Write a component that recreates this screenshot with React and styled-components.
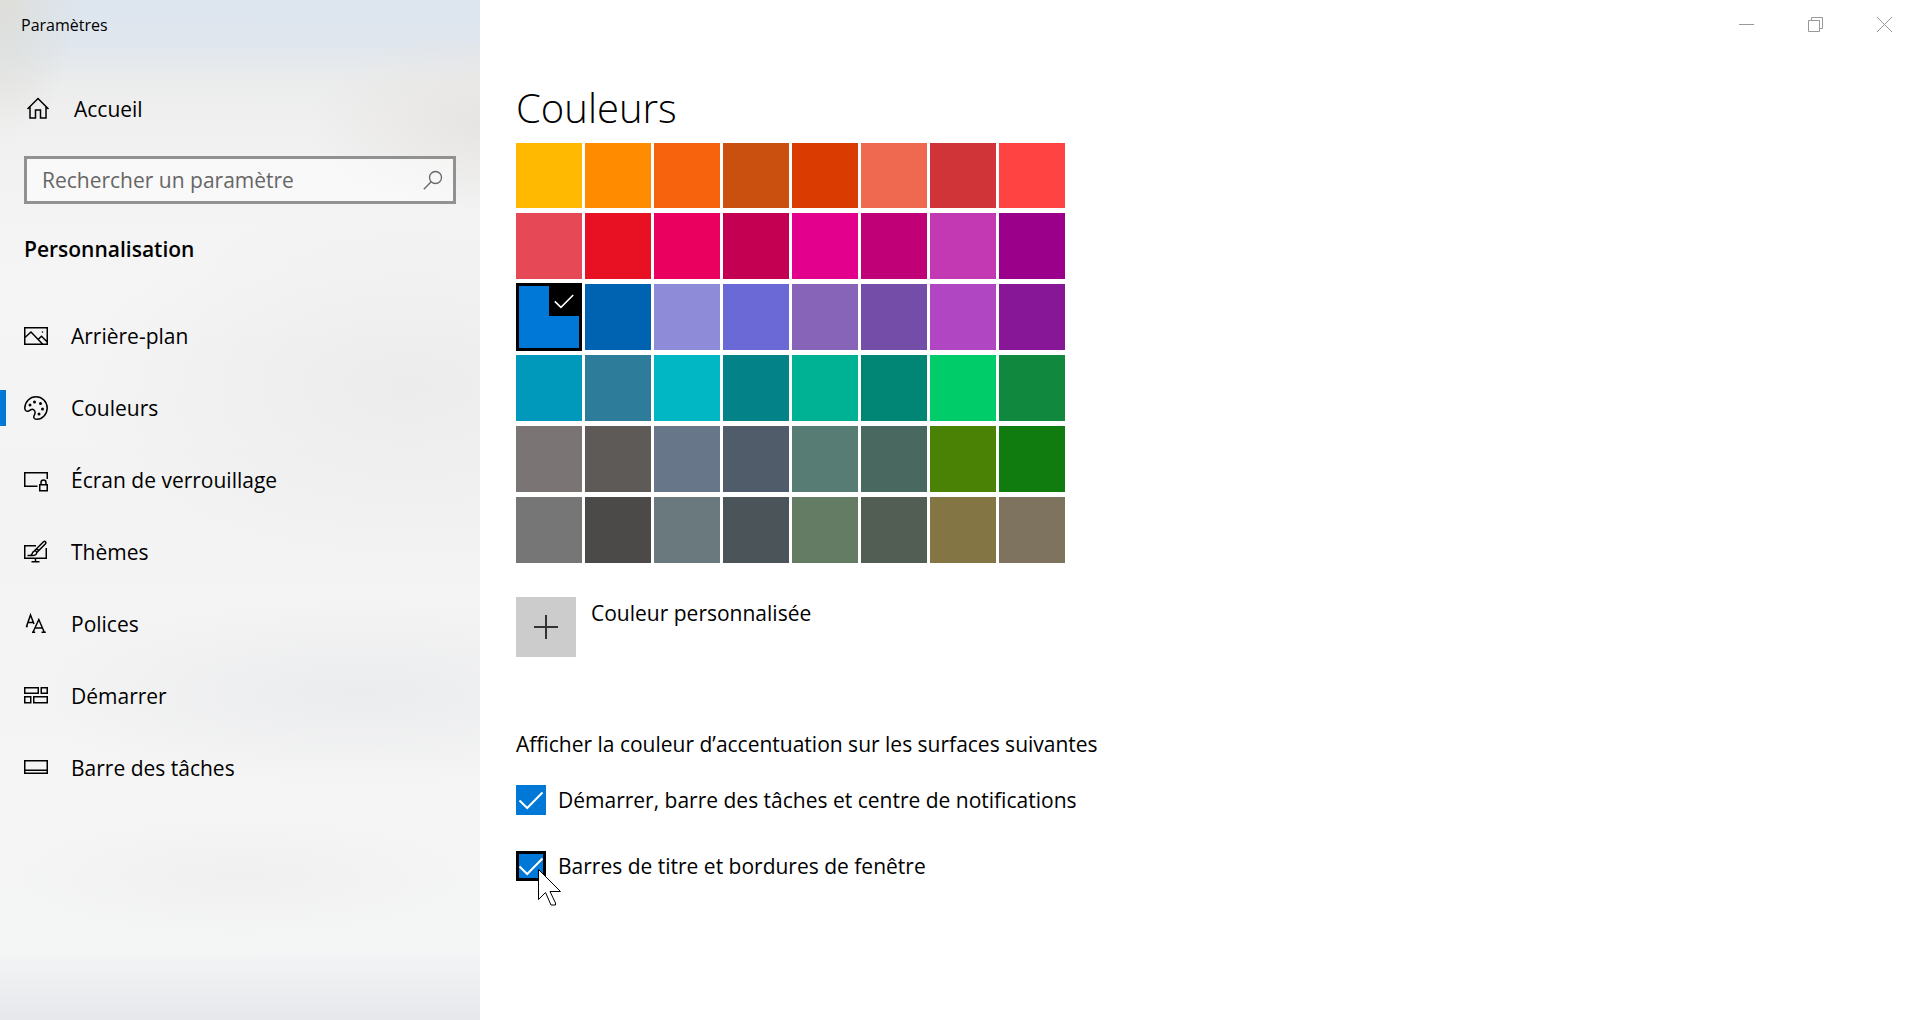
import React, { useState } from 'react';
import styled, { createGlobalStyle } from 'styled-components';

const swatches = [
  '#ffb900', '#ff8c00', '#f7630c', '#ca5010', '#da3b01', '#ef6950', '#d13438', '#ff4343',
  '#e74856', '#e81123', '#ea005e', '#c30052', '#e3008c', '#bf0077', '#c239b3', '#9a0089',
  '#0078d7', '#0063b1', '#8e8cd8', '#6b69d6', '#8764b8', '#744da9', '#b146c2', '#881798',
  '#0099bc', '#2d7d9a', '#00b7c3', '#038387', '#00b294', '#018574', '#00cc6a', '#10893e',
  '#7a7574', '#5d5a58', '#68768a', '#515c6b', '#567c73', '#486860', '#498205', '#107c10',
  '#767676', '#4c4a48', '#69797e', '#4a5459', '#647c64', '#525e54', '#847545', '#7e735f',
];

const HomeIcon = () => (
  <Icon viewBox="0 0 24 24">
    <path d="M1.5 12 12 1.5 22.5 12M4 10v11h5.500v-8h5v8H20V10" />
  </Icon>
);

const SearchIcon = () => (
  <svg width="20" height="20" viewBox="0 0 20 20" fill="none" stroke="#666" strokeWidth="1.300">
    <circle cx="12.500" cy="7.500" r="6" />
    <path d="M8.200 11.800.800 19.200" />
  </svg>
);

const PictureIcon = () => (
  <Icon viewBox="0 0 24 24">
    <path d="M.75 3.750h22.500v16.500H.750zM1 13.500l6-5.500 11.500 12M14 15.500l3.500-3.200 5.500 5.500" />
    <circle cx="18.500" cy="8" r=".8" fill="#000" stroke="none" />
  </Icon>
);

const PaletteIcon = () => (
  <Icon viewBox="0 0 24 24">
    <path d="M.800 12C1 5.500 6 .800 12 .800S23.200 5.800 23.200 12 18.300 23.200 13 23.200c-2.200 0-3.600-.9-3.200-2.700.4-1.700 1.500-2 1.300-4.200-.2-1.900-1.700-3.200-3.500-2.900-1.700.3-2.100 1.900-3.900 1.900C1.700 15.300.800 13.900.800 12z" />
    <g fill="#000" stroke="none">
      <circle cx="6" cy="9" r="1.500" />
      <circle cx="10.500" cy="6" r="1.500" />
      <circle cx="16.500" cy="7.500" r="1.500" />
      <circle cx="18.500" cy="13" r="1.500" />
      <circle cx="15" cy="18" r="1.500" />
    </g>
  </Icon>
);

const LockScreenIcon = () => (
  <Icon viewBox="0 0 24 24">
    <path d="M13.500 18.250H.750V4.750h22.500V11M15.750 16.750h7.500v6h-7.500zM17 16.500V14.500a2.500 2.500 0 0 1 5 0v2" />
  </Icon>
);

const ThemesIcon = () => (
  <Icon viewBox="0 0 24 24">
    <path d="M12 5.750H.750v12.500h21.500V8M11.500 18.500v3M7.500 21.750h8M3.500 15.500h5c2.500 0 4-.8 4.200-2.800 0-1.200-1-2-2.200-1.800-2.500.3-1.500 3.200-3.800 4.400M10.500 10.800 19.500 1.800c1.600-1.200 3 .4 2 1.900L12.800 12.600M12.800 8.800l2 2" />
  </Icon>
);

const FontsIcon = () => (
  <Icon viewBox="0 0 24 24" aria-hidden="true">
    <path d="M2.500 14.500 6.500 3l3.500 9M4 10.500h5M1.800 14.500h2M9 20.200 14.800 7.500l5.500 12.700M11 16h7.500M8 20.300h3.200M17.500 20.300h4.300" />
  </Icon>
);

const StartIcon = () => (
  <Icon viewBox="0 0 24 24">
    <path d="M.750 3.750h13.500v5.500H.750zM17.250 3.750h6v5.500h-6zM.750 12.750h6v6h-6zM9.750 12.750h13.500v6H9.750z" />
  </Icon>
);

const TaskbarIcon = () => (
  <Icon viewBox="0 0 24 24">
    <path d="M.750 4.750h22.500v12.500H.750zM1 14.250h22" />
  </Icon>
);

const CheckMark = ({ size }) => (
  <svg width={size} height={size} viewBox="0 0 30 30" fill="none" stroke="#fff" strokeWidth="2">
    <path d="M3.500 15.500 11.200 23 26.500 7.500" />
  </svg>
);

const navItems = [
  { label: 'Arrière-plan', icon: PictureIcon },
  { label: 'Couleurs', icon: PaletteIcon },
  { label: 'Écran de verrouillage', icon: LockScreenIcon },
  { label: 'Thèmes', icon: ThemesIcon },
  { label: 'Polices', icon: FontsIcon },
  { label: 'Démarrer', icon: StartIcon },
  { label: 'Barre des tâches', icon: TaskbarIcon },
];

const App = () => {
  const [accent, setAccent] = useState('#0078d7');
  const [onTaskbar, setOnTaskbar] = useState(true);
  const [onTitleBars, setOnTitleBars] = useState(true);

  return (
    <>
      <GlobalStyle />
      <Window>
        <Sidebar>
          <AppTitle>Paramètres</AppTitle>
          <HomeLink href="#accueil">
            <HomeIcon />
            Accueil
          </HomeLink>
          <SearchBox>
            <input type="text" aria-label="Rechercher un paramètre" placeholder="Rechercher un paramètre" />
            <SearchIcon />
          </SearchBox>
          <Category>Personnalisation</Category>
          <nav>
            {navItems.map(({ label, icon: NavIcon }) => (
              <NavLink key={label} href="#" $active={label === 'Couleurs'}>
                <NavIcon />
                {label}
              </NavLink>
            ))}
          </nav>
        </Sidebar>
        <Main>
          <WindowControls>
            <button type="button" aria-label="Réduire">
              <ControlIcon viewBox="0 0 15 15">
                <path d="M0 7.500h15" />
              </ControlIcon>
            </button>
            <button type="button" aria-label="Niveau inférieur">
              <ControlIcon viewBox="0 0 15 15">
                <path d="M.5 3.500h11v11H.5zM3.500 3V.5h11v11H12" />
              </ControlIcon>
            </button>
            <button type="button" aria-label="Fermer">
              <ControlIcon viewBox="0 0 15 15">
                <path d="m0 0 15 15M15 0 0 15" />
              </ControlIcon>
            </button>
          </WindowControls>
          <Content>
            <h1>Couleurs</h1>
            <Palette role="radiogroup" aria-label="Couleurs">
              {swatches.map((color) => (
                <Swatch key={color} $color={color} $selected={color === accent}>
                  <input type="radio" name="accent" aria-label={color} checked={color === accent} onChange={() => setAccent(color)} />
                  {color === accent && (
                    <SwatchCheck>
                      <CheckMark size={24} />
                    </SwatchCheck>
                  )}
                </Swatch>
              ))}
            </Palette>
            <CustomColor>
              <button type="button" id="custom-color" aria-label="Couleur personnalisée">
                <svg width="24" height="24" viewBox="0 0 24 24" stroke="#333" strokeWidth="2">
                  <path d="M0 12h24M12 0v24" />
                </svg>
              </button>
              <label htmlFor="custom-color">Couleur personnalisée</label>
            </CustomColor>
            <Surfaces>
              <legend>Afficher la couleur d’accentuation sur les surfaces suivantes</legend>
              <CheckRow>
                <CheckBox>
                  <input type="checkbox" checked={onTaskbar} onChange={() => setOnTaskbar(!onTaskbar)} />
                  {onTaskbar && <CheckMark size={30} />}
                </CheckBox>
                Démarrer, barre des tâches et centre de notifications
              </CheckRow>
              <CheckRow>
                <CheckBox $focused>
                  <input type="checkbox" checked={onTitleBars} onChange={() => setOnTitleBars(!onTitleBars)} />
                  {onTitleBars && <CheckMark size={30} />}
                  <Pointer viewBox="0 0 24 38">
                    <path d="M.5.500v30l7-7 5.500 12.500h4.500v-2L12 22.500h10.500z" />
                  </Pointer>
                </CheckBox>
                Barres de titre et bordures de fenêtre
              </CheckRow>
            </Surfaces>
          </Content>
        </Main>
      </Window>
    </>
  );
};

const GlobalStyle = createGlobalStyle`
  * {
    box-sizing: border-box;
  }
  body {
    margin: 0;
    background: #fff;
    color: #000;
    font-family: 'Segoe UI', 'Open Sans', 'Noto Sans', sans-serif;
    font-size: 21px;
    line-height: 30px;
  }
  button, input {
    margin: 0;
    padding: 0;
    border: 0;
    font: inherit;
  }
`;

const Window = styled.div`
  display: grid;
  grid-template-columns: minmax(300px, 25%) 1fr;
  min-height: 100vh;
`;

const Sidebar = styled.aside`
  background:
    radial-gradient(ellipse 16% 14% at 0% 0%, #deded9 0%, #deded900 100%),
    radial-gradient(ellipse 36% 9% at 100% 12%, #e7e5e3 0%, #e7e5e300 100%),
    radial-gradient(ellipse 70% 18% at 85% 38%, #ececec 0%, #ececec00 100%),
    radial-gradient(ellipse 70% 9% at 75% 68%, #ebecee 0%, #ebecee00 100%),
    radial-gradient(ellipse 50% 6% at 50% 86%, #f0f0f0 0%, #f0f0f000 100%),
    linear-gradient(#dde5ee 0%, #dfe6ee 4%, #ebecec 8%, #f0f0f0 12%, #f3f3f3 20%, #f5f5f5 28%, #f3f3f3 50%, #f5f5f5 80%, #f4f5f5 93%, #e6e8ec 100%);
`;

const AppTitle = styled.div`
  padding: 10px 21px;
  font-size: 16px;
`;

const Icon = styled.svg`
  flex: none;
  width: 24px;
  height: 24px;
  fill: none;
  stroke: #000;
  stroke-width: 1.5px;
`;

const HomeLink = styled.a`
  display: flex;
  align-items: center;
  gap: 24px;
  height: 72px;
  margin-top: 23px;
  padding: 0 26px;
  color: inherit;
  text-decoration: none;
`;

const SearchBox = styled.div`
  display: flex;
  align-items: center;
  height: 48px;
  margin: 11px 24px 0;
  padding: 0 10px 0 15px;
  border: 3px solid #919191;
  background: #ffffff80;
  input {
    flex: 1;
    min-width: 0;
    background: none;
    outline: none;
  }
  input::placeholder {
    color: #666;
    opacity: 1;
  }
`;

const Category = styled.div`
  margin: 30px 24px 36px;
  font-weight: 600;
`;

const NavLink = styled.a`
  display: flex;
  align-items: center;
  gap: 23px;
  height: 72px;
  padding-right: 24px;
  color: inherit;
  text-decoration: none;
  &::before {
    content: '';
    width: 6px;
    height: 36px;
    margin-right: -5px;
    background: ${(props) => (props.$active ? '#0078d7' : 'transparent')};
  }
`;

const Main = styled.main`
  display: flex;
  flex-direction: column;
`;

const WindowControls = styled.div`
  display: flex;
  justify-content: flex-end;
  padding-right: 1px;
  button {
    display: flex;
    align-items: center;
    justify-content: center;
    width: 69px;
    height: 48px;
    background: none;
  }
`;

const ControlIcon = styled.svg`
  width: 15px;
  height: 15px;
  fill: none;
  stroke: #999;
  stroke-width: 1px;
`;

const Content = styled.div`
  padding: 30px 36px;
  h1 {
    margin: 0 0 5px;
    font-size: 40px;
    font-weight: 300;
    line-height: 60px;
  }
`;

const Palette = styled.div`
  display: grid;
  grid-template-columns: repeat(8, 66px);
  grid-template-rows: 65px repeat(5, 66px);
  gap: 5px 3px;
`;

const Swatch = styled.label`
  position: relative;
  margin: ${(props) => (props.$selected ? '-1px 0' : '0')};
  border: ${(props) => (props.$selected ? '3px solid #000' : '0')};
  background: ${(props) => props.$color};
  input {
    display: block;
    width: 100%;
    height: 100%;
    appearance: none;
    outline: none;
  }
`;

const SwatchCheck = styled.span`
  position: absolute;
  top: 0;
  right: 0;
  display: flex;
  align-items: center;
  justify-content: center;
  width: 30px;
  height: 30px;
  background: #000;
  pointer-events: none;
`;

const CustomColor = styled.div`
  display: flex;
  gap: 15px;
  margin-top: 34px;
  button {
    display: flex;
    align-items: center;
    justify-content: center;
    width: 60px;
    height: 60px;
    background: #ccc;
  }
  label {
    padding-top: 1px;
  }
`;

const Surfaces = styled.fieldset`
  display: flex;
  flex-direction: column;
  gap: 36px;
  margin: 72px 0 0;
  padding: 0;
  border: 0;
  legend {
    margin-bottom: 26px;
    padding: 0;
  }
`;

const CheckRow = styled.label`
  display: flex;
  align-items: center;
  gap: 12px;
`;

const CheckBox = styled.span`
  position: relative;
  width: 30px;
  height: 30px;
  input {
    display: block;
    width: 30px;
    height: 30px;
    appearance: none;
    border: ${(props) => (props.$focused ? '3px solid #000' : '0')};
    background: #fff;
    outline: none;
  }
  input:checked {
    background: #0078d7;
  }
  svg {
    position: absolute;
    top: 0;
    left: 0;
    pointer-events: none;
  }
`;

const Pointer = styled.svg`
  && {
    top: 18px;
    left: 22px;
  }
  width: 24px;
  height: 38px;
  fill: #fff;
  stroke: #000;
  stroke-width: 1px;
`;

export default App;
